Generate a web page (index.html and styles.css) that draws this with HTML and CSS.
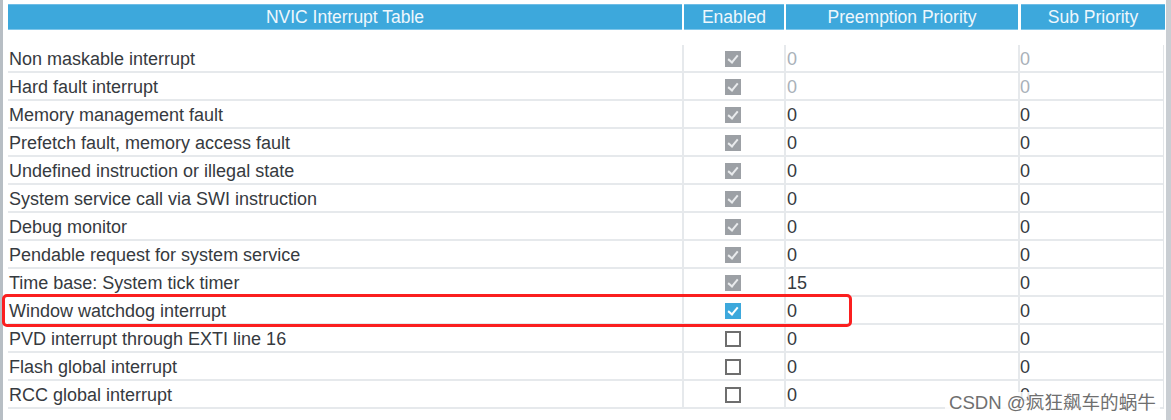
FILE: index.html
```html
<!DOCTYPE html>
<html>
<head>
<meta charset="utf-8">
<link rel="stylesheet" href="styles.css">
</head>
<body>
<div class="page">
  <div class="strip-left"></div>
  <div class="main">
    <div class="table">
      <div class="head">
        <div class="hcell">NVIC Interrupt Table</div>
        <div class="hcell">Enabled</div>
        <div class="hcell">Preemption Priority</div>
        <div class="hcell last">Sub Priority</div>
      </div>
      <div class="body">
        <div class="row"><div class="c name">Non maskable interrupt</div><div class="c en"><span class="cb dis"></span></div><div class="c num muted">0</div><div class="c num last muted">0</div></div>
        <div class="row"><div class="c name">Hard fault interrupt</div><div class="c en"><span class="cb dis"></span></div><div class="c num muted">0</div><div class="c num last muted">0</div></div>
        <div class="row"><div class="c name">Memory management fault</div><div class="c en"><span class="cb dis"></span></div><div class="c num">0</div><div class="c num last">0</div></div>
        <div class="row"><div class="c name">Prefetch fault, memory access fault</div><div class="c en"><span class="cb dis"></span></div><div class="c num">0</div><div class="c num last">0</div></div>
        <div class="row"><div class="c name">Undefined instruction or illegal state</div><div class="c en"><span class="cb dis"></span></div><div class="c num">0</div><div class="c num last">0</div></div>
        <div class="row"><div class="c name">System service call via SWI instruction</div><div class="c en"><span class="cb dis"></span></div><div class="c num">0</div><div class="c num last">0</div></div>
        <div class="row"><div class="c name">Debug monitor</div><div class="c en"><span class="cb dis"></span></div><div class="c num">0</div><div class="c num last">0</div></div>
        <div class="row"><div class="c name">Pendable request for system service</div><div class="c en"><span class="cb dis"></span></div><div class="c num">0</div><div class="c num last">0</div></div>
        <div class="row"><div class="c name">Time base: System tick timer</div><div class="c en"><span class="cb dis"></span></div><div class="c num">15</div><div class="c num last">0</div></div>
        <div class="row"><div class="c name">Window watchdog interrupt</div><div class="c en"><span class="cb on"></span></div><div class="c num">0</div><div class="c num last">0</div></div>
        <div class="row"><div class="c name">PVD interrupt through EXTI line 16</div><div class="c en"><span class="cb off"></span></div><div class="c num">0</div><div class="c num last">0</div></div>
        <div class="row"><div class="c name">Flash global interrupt</div><div class="c en"><span class="cb off"></span></div><div class="c num">0</div><div class="c num last">0</div></div>
        <div class="row"><div class="c name">RCC global interrupt</div><div class="c en"><span class="cb off"></span></div><div class="c num">0</div><div class="c num last">0</div></div>
      </div>
    </div>
  </div>
  <div class="strip-right"></div>
  <div class="highlight"></div>
  <div class="watermark">CSDN @疯狂飙车的蜗牛</div>
</div>
</body>
</html>
```

FILE: styles.css
```css
html, body {
  margin: 0;
  padding: 0;
  background: #ffffff;
}
body {
  font-family: "Liberation Sans", Arial, sans-serif;
  color: #363a40;
}
.page {
  position: relative;
  width: 1171px;
  height: 420px;
  display: flex;
  overflow: hidden;
}
.strip-left {
  width: 3px;
  background: #b7bec4;
  flex: none;
}
.main {
  flex: none;
  width: 1163px;
  padding-left: 5px;
  box-sizing: border-box;
}
.strip-right {
  flex: none;
  width: 5px;
  background: #c9ced3;
}
.table {
  width: 1157px;
  padding-top: 4px;
}
.head {
  display: grid;
  grid-template-columns: 676px 102px 234px 145px;
  height: 26px;
}
.hcell {
  background: #3da8dc;
  margin-right: 2px;
  color: #eef7fc;
  font-size: 17.5px;
  line-height: 26px;
  text-align: center;
  box-shadow: inset 0 1px 0 #6fbde6, inset 0 -1px 0 #7fc6ea;
}
.hcell.last {
  margin-right: 0;
  margin-left: 1px;
}
.body {
  margin-top: 15px;
  border-right: 1px solid #e3e6e9;
  width: 1155px;
}
.row {
  display: grid;
  grid-template-columns: 676px 102px 234px 143px;
  height: 28px;
  box-sizing: border-box;
  border-bottom: 2px solid #e6e9ec;
}
.c {
  font-size: 18px;
  line-height: 24px;
  padding-top: 2px;
  white-space: nowrap;
  border-right: 2px solid #e6e9ec;
  box-sizing: border-box;
}
.c.last {
  border-right: none;
}
.name {
  padding-left: 1px;
}
.num {
  padding-left: 1px;
}
.num.last {
  padding-left: 0;
}
.muted {
  color: #a9b1b9;
}
.en {
  display: flex;
  align-items: center;
  justify-content: center;
}
.cb {
  display: block;
  width: 16px;
  height: 16px;
  box-sizing: border-box;
  position: relative;
  margin-left: -2px;
}
.cb.dis {
  background: #9ca0a5;
}
.cb.on {
  background: #3da8dc;
}
.cb.off {
  background: #ffffff;
  border: 2px solid #6e6e6e;
}
.cb.dis::after, .cb.on::after {
  content: "";
  position: absolute;
  left: 5px;
  top: 2px;
  width: 4px;
  height: 8px;
  border-right: 2px solid #ffffff;
  border-bottom: 2px solid #ffffff;
  transform: rotate(40deg);
}
.cb.dis::after {
  border-color: #e9ebed;
}
.highlight {
  position: absolute;
  left: 2px;
  top: 294px;
  width: 850px;
  height: 33px;
  box-sizing: border-box;
  border: 3px solid #fb1f1f;
  border-radius: 5px;
}
.watermark {
  position: absolute;
  left: 945px;
  top: 392px;
  padding: 0 4px;
  font-family: "Liberation Sans", "Noto Sans CJK SC", sans-serif;
  font-size: 18.6px;
  line-height: 22px;
  color: #6f6f6f;
  background: rgba(255, 255, 255, 0.85);
}
```
